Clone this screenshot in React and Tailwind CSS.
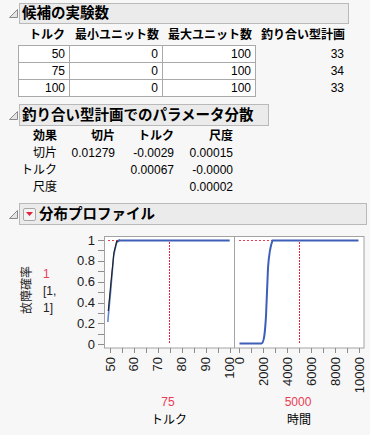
import React from "react";

const RED = "#ec3b55";

const Tri = () => (
  <svg width="9" height="9" viewBox="0 0 9 9" className="block">
    <polygon points="8.5,0.5 8.5,8.5 0.5,8.5" fill="#e4e4e4" stroke="#8a8a8a" strokeWidth="1" />
  </svg>
);

const Header = ({ box, children }) => (
  <div className="flex h-[22px]">
    <div className="w-[19px] flex items-center pl-[9px]">
      <Tri />
    </div>
    <div
      className={
        box +
        " h-full bg-[#ebebeb] border border-[#b9b9b9] flex items-center pl-[2px] text-[14.5px] font-bold leading-none text-black"
      }
    >
      {children}
    </div>
  </div>
);

const cell1 = "h-[17px] bg-white border-r border-b border-[#a9a9a9] text-right pr-[4px] leading-[16px]";

const rows1 = [
  ["50", "0", "100", "33"],
  ["75", "0", "100", "34"],
  ["100", "0", "100", "33"],
];

const yTicks = Array.from({ length: 11 }, (_, i) => 344.3 - i * 10.43);
const yLabels = ["0", "0.2", "0.4", "0.6", "0.8", "1"];
const xLeft = Array.from({ length: 11 }, (_, i) => 110 + i * 11.97);
const xRight = Array.from({ length: 11 }, (_, i) => 239.3 + i * 12);
const leftLabels = ["50", "60", "70", "80", "90", "100"];
const rightLabels = ["0", "2000", "4000", "6000", "8000", "10000"];

const Chart = () => (
  <svg width="310" height="170" className="block shrink-0 font-['Liberation_Sans',sans-serif]">
    <g transform="translate(-60,-225)">
      <rect x="104.5" y="236.5" width="259.5" height="111.5" fill="#fff" stroke="#a3a3a3" />
      <line x1="234.5" y1="236.5" x2="234.5" y2="348" stroke="#a3a3a3" />

      {yTicks.map((y, i) => (
        <line key={"yt" + i} x1="98" x2="104" y1={Math.round(y) + 0.5} y2={Math.round(y) + 0.5} stroke="#8c8c8c" />
      ))}
      {yLabels.map((t, i) => (
        <text key={"yl" + i} x="95" y={yTicks[i * 2]} fontSize="13" textAnchor="end" dominantBaseline="central" fill="#1a1a1a">
          {t}
        </text>
      ))}

      {xLeft.map((x, i) => (
        <line key={"xl" + i} x1={Math.round(x) + 0.5} x2={Math.round(x) + 0.5} y1="348" y2="353" stroke="#8c8c8c" />
      ))}
      {xRight.map((x, i) => (
        <line key={"xr" + i} x1={Math.round(x) + 0.5} x2={Math.round(x) + 0.5} y1="348" y2="353" stroke="#8c8c8c" />
      ))}
      {leftLabels.map((t, i) => (
        <text key={"ll" + i} transform={`translate(${xLeft[i * 2]},357) rotate(-90)`} fontSize="13" textAnchor="end" dominantBaseline="central" fill="#1a1a1a">
          {t}
        </text>
      ))}
      {rightLabels.map((t, i) => (
        <text key={"rl" + i} transform={`translate(${xRight[i * 2]},357) rotate(-90)`} fontSize="13" textAnchor="end" dominantBaseline="central" fill="#1a1a1a">
          {t}
        </text>
      ))}

      {/* left panel: torque */}
      <line x1="108" y1="240.5" x2="120" y2="240.5" stroke={RED} strokeDasharray="2 2" shapeRendering="crispEdges" />
      <line x1="169.5" y1="242" x2="169.5" y2="344" stroke="#f0203f" strokeDasharray="2 1" shapeRendering="crispEdges" />
      <polygon points="107.5,323 110.5,292 113.5,257 116.5,243 119.5,240 118,240 115,246 112,268 109,298 108,305" fill="#b5c7f0" />
      <polyline points="107.8,322 110.8,290 113.6,256 116.5,243 120,240" fill="none" stroke="#5b80d8" strokeWidth="1.5" />
      <polyline points="108.3,311 111,282 114,252 116.7,241.5 120,240" fill="none" stroke="#222" strokeWidth="1.2" />
      <line x1="118" y1="240.5" x2="229.7" y2="240.5" stroke="#3d5fb8" strokeWidth="2" />

      {/* right panel: time */}
      <line x1="239" y1="240.5" x2="272" y2="240.5" stroke={RED} strokeDasharray="2 2" shapeRendering="crispEdges" />
      <line x1="299.5" y1="242" x2="299.5" y2="344" stroke="#f0203f" strokeDasharray="2 1" shapeRendering="crispEdges" />
      <path
        d="M239.5 343.5 L261.5 343.5 C264 343 265 333 266 316 L268 268 C269 254 270 247 272.5 240.5 L358.5 240.5"
        fill="none"
        stroke="#3d5fb8"
        strokeWidth="2"
      />
    </g>
  </svg>
);

export default function App() {
  return (
    <div className="w-[370px] h-[435px] overflow-hidden bg-[#f7f7f7] pt-[3px] text-black font-['Liberation_Sans','Noto_Sans_CJK_JP',sans-serif]">
      {/* 候補の実験数 */}
      <div className="h-[21px] flex">
        <div className="w-[19px] flex items-center pl-[9px]">
          <Tri />
        </div>
        <div className="w-[330px] h-full bg-[#ebebeb] border border-[#b9b9b9] flex items-center pl-[2px] text-[14.5px] font-bold leading-none">
          候補の実験数
        </div>
      </div>
      <div className="mt-[3px] ml-[18px] grid grid-cols-[52px_93px_93px_93px] text-[12px] font-bold leading-[17px] h-[17px]">
        <div className="text-right pr-[5px]">トルク</div>
        <div className="text-right pr-[4px]">最小ユニット数</div>
        <div className="text-right pr-[4px]">最大ユニット数</div>
        <div className="text-right pr-[4px]">釣り合い型計画</div>
      </div>
      <div className="mt-[1px] ml-[18px] grid grid-cols-[52px_93px_93px_93px] text-[12px]">
        {rows1.map((r, ri) => (
          <React.Fragment key={ri}>
            <div className={cell1 + " border-l" + (ri === 0 ? " border-t h-[18px]" : "")}>{r[0]}</div>
            <div className={cell1 + (ri === 0 ? " border-t h-[18px]" : "")}>{r[1]}</div>
            <div className={cell1 + (ri === 0 ? " border-t h-[18px]" : "")}>{r[2]}</div>
            <div className={"text-right pr-[5px] leading-[16px]" + (ri === 0 ? " pt-[1px]" : "")}>{r[3]}</div>
          </React.Fragment>
        ))}
      </div>

      {/* 釣り合い型計画でのパラメータ分散 */}
      <div className="mt-[7px]">
        <Header box="w-[250px]">釣り合い型計画でのパラメータ分散</Header>
      </div>
      <div className="mt-[2px] grid grid-cols-[57px_58px_59px_59px] text-[12px] leading-[17px] text-right">
        <div className="font-bold">効果</div>
        <div className="font-bold">切片</div>
        <div className="font-bold">トルク</div>
        <div className="font-bold">尺度</div>
        <div>切片</div>
        <div>0.01279</div>
        <div>-0.0029</div>
        <div>0.00015</div>
        <div>トルク</div>
        <div></div>
        <div>0.00067</div>
        <div>-0.0000</div>
        <div>尺度</div>
        <div></div>
        <div></div>
        <div>0.00002</div>
      </div>

      {/* 分布プロファイル */}
      <div className="mt-[7px] flex h-[22px]">
        <div className="w-[19px] flex items-center pl-[9px]">
          <Tri />
        </div>
        <div className="w-[348px] h-full bg-[#ebebeb] border border-[#b9b9b9] flex items-center pl-[3px] text-[14.5px] font-bold leading-none">
          <div className="w-[13px] h-[13px] mr-[3px] rounded-[2px] border border-[#a8a8a8] bg-[#f4f4f4] flex items-center justify-center">
            <svg width="7" height="4" viewBox="0 0 7 4" className="block">
              <polygon points="0,0 7,0 3.5,4" fill="#e0223c" />
            </svg>
          </div>
          分布プロファイル
        </div>
      </div>

      <div className="flex h-[170px]">
        <div className="w-[60px] shrink-0 flex pt-[41px]">
          <div className="ml-[20px] w-[14px] h-[48px] text-[12px] leading-[14px] [writing-mode:vertical-rl] [text-orientation:sideways] rotate-180 text-[#222]">
            故障確率
          </div>
          <div className="ml-[9px] text-[12px] leading-[17px] text-[#222]">
            <div className="text-[#ec3b55]">1</div>
            <div>[1,</div>
            <div>1]</div>
          </div>
        </div>
        <Chart />
      </div>

      <div className="ml-[104px] flex text-[12px] leading-[14px] h-[14px]">
        <div className="w-[130px] text-center text-[#ec3b55] pr-[2px]">75</div>
        <div className="w-[130px] text-center text-[#ec3b55] pr-[2px]">5000</div>
      </div>
      <div className="mt-[4px] ml-[104px] flex text-[12px] leading-[14px] h-[14px]">
        <div className="w-[130px] text-center">トルク</div>
        <div className="w-[130px] text-center">時間</div>
      </div>
    </div>
  );
}
